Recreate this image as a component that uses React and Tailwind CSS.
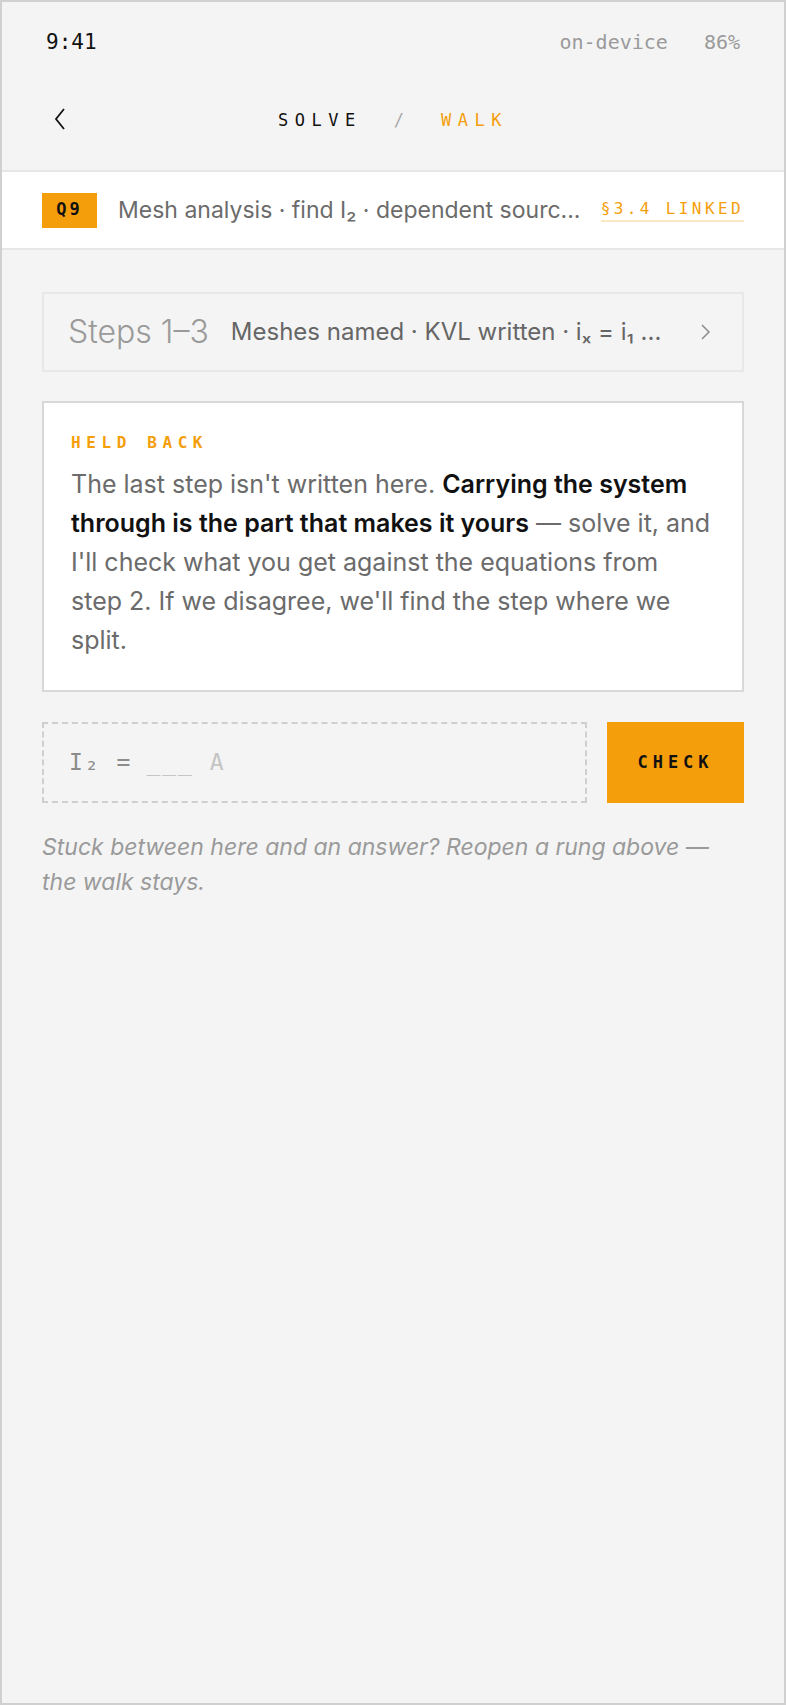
import React from 'react';

const mono = { fontFamily: '"DejaVu Sans Mono", "Liberation Mono", monospace' };

const App = () => {
  return (
    <div
      className="w-[786px] h-[1705px] border-2 border-[#d0d0d0] bg-[#f4f4f4] flex flex-col"
      style={{ fontFamily: 'Inter, "Noto Sans", sans-serif' }}
    >
      {/* status bar */}
      <div className="h-[80px] pt-[2px] flex items-center justify-between pl-[44px] pr-[44px]" style={mono}>
        <span className="text-[21px] text-[#111]">9:41</span>
        <div className="flex items-center gap-[36px] text-[20px] text-[#9a9a9a] pb-[2px]">
          <span>on-device</span>
          <span>86%</span>
        </div>
      </div>

      {/* nav */}
      <div className="h-[90px] pb-[10px] border-b-2 border-[#e6e6e6] relative flex items-center justify-center">
        <button className="absolute left-[47px] top-[21px] p-1 text-[#111]">
          <svg width="14" height="24" viewBox="0 0 14 24" fill="none" stroke="currentColor" strokeWidth="1.8">
            <polyline points="11,2 3,12 11,22" />
          </svg>
        </button>
        <div className="flex items-center text-[17px]" style={mono}>
          <span className="tracking-[6.5px] text-[#111]">SOLVE</span>
          <span className="ml-[32px] mr-[37px] text-[#aaa]">/</span>
          <span className="tracking-[6.5px] text-[#f59e0b]">WALK</span>
        </div>
      </div>

      {/* question strip */}
      <div className="h-[78px] bg-white border-b-2 border-[#e6e6e6] flex items-center px-[40px]">
        <span
          className="w-[55px] h-[35px] bg-[#f59e0b] flex items-center justify-center text-[17px] font-bold tracking-[3px] text-[#111] shrink-0"
          style={mono}
        >
          Q9
        </span>
        <span className="ml-[21px] text-[23px] text-[#6b6b6b] whitespace-nowrap overflow-hidden flex-1">
          Mesh analysis · find I₂ · dependent sourc...
        </span>
        <span
          className="text-[16px] tracking-[3.4px] text-[#f59e0b] border-b-2 border-[#fde8c4] leading-[22px] shrink-0"
          style={mono}
        >
          §3.4 LINKED
        </span>
      </div>

      {/* main */}
      <div className="px-[40px] pt-[42px] flex flex-col">
        <div className="h-[80px] border-2 border-[#e8e8e8] flex items-center pl-[24px] pr-[32px]">
          <span className="text-[32px] font-light text-[#9a9a9a] whitespace-nowrap">Steps 1–3</span>
          <span className="ml-[22px] text-[24px] text-[#666] whitespace-nowrap overflow-hidden flex-1">
            Meshes named · KVL written · iₓ = i₁ ...
          </span>
          <svg width="9" height="16" viewBox="0 0 9 16" fill="none" stroke="#8a8a8a" strokeWidth="1.5">
            <polyline points="1,1 8,8 1,15" />
          </svg>
        </div>

        <div className="mt-[29px] bg-white border-2 border-[#d8d8d8] px-[27px] pt-[28px] pb-[30px]">
          <div className="text-[16px] font-bold tracking-[5.6px] text-[#f59e0b] leading-[24px]" style={mono}>
            HELD BACK
          </div>
          <p className="mt-[10px] text-[25px] leading-[39px] text-[#6b6b6b]">
            The last step isn't written here.{' '}
            <span className="font-semibold text-[#111]">Carrying the system</span>{' '}
            <span className="font-semibold text-[#111]">through is the part that makes it yours</span>{' '}
            — solve it, and I'll check what you get against the equations from step 2. If we disagree, we'll find the step
            where we split.
          </p>
        </div>

        <div className="mt-[30px] flex gap-[20px] h-[81px]">
          <div
            className="flex-1 border-2 border-dashed border-[#cfcfcf] flex items-center pl-[25px] text-[23px] tracking-[2px]"
            style={mono}
          >
            <span className="text-[#8c8c8c]">I₂ =</span>
            <span className="ml-[14px] text-[#c4c4c4]">___ A</span>
          </div>
          <button
            className="w-[137px] bg-[#f59e0b] text-[17px] font-bold tracking-[5px] text-[#111] flex items-center justify-center"
            style={mono}
          >
            CHECK
          </button>
        </div>

        <p className="mt-[27px] text-[23px] italic leading-[35px] text-[#9a9a9a] pr-[20px]">
          Stuck between here and an answer? Reopen a rung above — the walk stays.
        </p>
      </div>
    </div>
  );
};

export default App;
